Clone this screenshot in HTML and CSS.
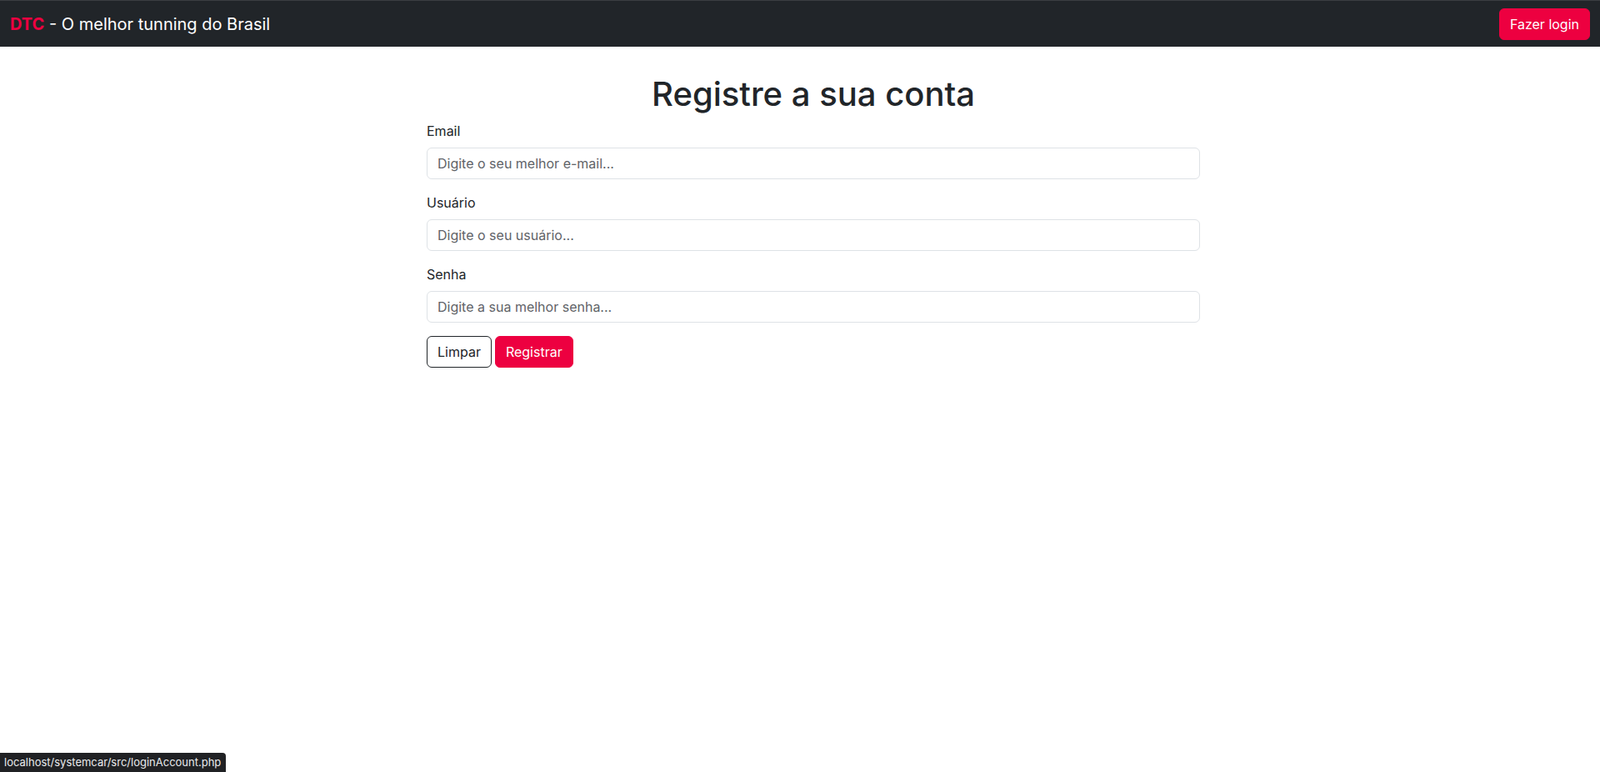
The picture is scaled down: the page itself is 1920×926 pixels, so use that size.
FILE: index.html
```html
<!DOCTYPE html>
<html lang="pt-BR">
<head>
<meta charset="utf-8">
<title>DTC - Registrar</title>
<link rel="stylesheet" href="styles.css">
</head>
<body>
<nav class="navbar">
  <a class="brand" href="#"><span class="brand-accent">DTC</span> - O melhor tunning do Brasil</a>
  <a class="btn btn-red" href="#">Fazer login</a>
</nav>
<main class="page">
  <h1 class="title">Registre a sua conta</h1>
  <form class="form">
    <div class="group">
      <label class="label" for="email">Email</label>
      <input class="input" id="email" type="email" placeholder="Digite o seu melhor e-mail...">
    </div>
    <div class="group">
      <label class="label" for="user">Usuário</label>
      <input class="input" id="user" type="text" placeholder="Digite o seu usuário...">
    </div>
    <div class="group">
      <label class="label" for="pass">Senha</label>
      <input class="input" id="pass" type="password" placeholder="Digite a sua melhor senha...">
    </div>
    <div class="actions">
      <button class="btn btn-outline" type="reset">Limpar</button>
      <button class="btn btn-red" type="submit">Registrar</button>
    </div>
  </form>
</main>
<div class="status">localhost/systemcar/src/loginAccount.php</div>
</body>
</html>
```
FILE: styles.css
```css
* { box-sizing: border-box; }
html, body { margin: 0; padding: 0; }
body {
  font-family: Inter, "Noto Sans", "Liberation Sans", sans-serif;
  font-size: 16px;
  line-height: 1.5;
  color: #212529;
  background: #fff;
}
.navbar {
  display: flex;
  align-items: center;
  justify-content: space-between;
  height: 56px;
  padding: 1px 12px 0 12px;
  background: #212529;
  border-top: 1px solid #3b3e42;
}
.brand {
  color: #fff;
  font-size: 20px;
  line-height: 30px;
  text-decoration: none;
  padding-bottom: 1px;
}
.brand-accent { color: #ed0040; font-weight: 700; }
.btn {
  display: inline-block;
  font-family: inherit;
  font-size: 16px;
  line-height: 24px;
  padding: 6px 12px;
  border: 1px solid transparent;
  border-radius: 6px;
  text-decoration: none;
  cursor: pointer;
  vertical-align: middle;
}
.btn-red {
  background: #ed0040;
  border-color: #ed0040;
  color: #fff;
}
.btn-outline {
  background: #fff;
  border-color: #212529;
  color: #212529;
}
.page {
  width: 928px;
  margin: 33px 0 0 calc(50% - 448px);
}
.title {
  margin: 0 0 8px;
  font-size: 40px;
  font-weight: 500;
  line-height: 1.2;
  text-align: center;
}
.group { margin-bottom: 16px; }
.label {
  display: block;
  margin-bottom: 8px;
}
.input {
  display: block;
  width: 100%;
  height: 38px;
  padding: 6px 12px;
  font-family: inherit;
  font-size: 16px;
  line-height: 24px;
  color: #212529;
  background: #fff;
  border: 1px solid #dee2e6;
  border-radius: 6px;
  outline: none;
}
.input::placeholder { color: #5f6368; opacity: 1; }
.actions { display: flex; gap: 4px; }
.status {
  position: fixed;
  left: 0;
  bottom: 0;
  height: 23px;
  padding: 0 6px 0 5px;
  background: #202124;
  color: #e8eaed;
  font-family: Inter, "Noto Sans", "Liberation Sans", sans-serif;
  font-size: 13px;
  line-height: 23px;
  border-top-right-radius: 4px;
}
```
